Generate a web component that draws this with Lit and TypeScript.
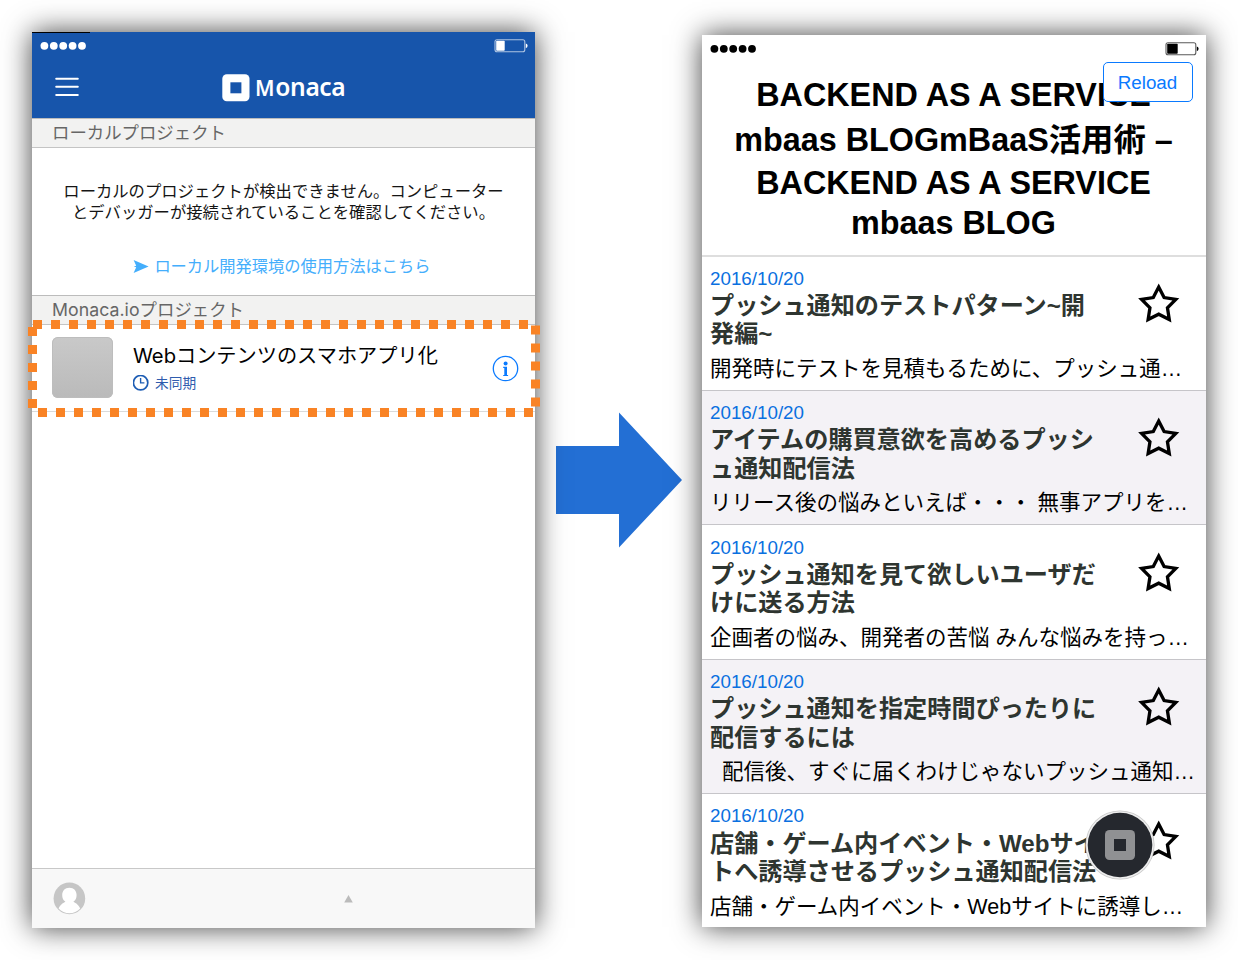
import { LitElement, html, css, svg } from "lit";
import { customElement, property } from "lit/decorators.js";

const starPoints = (() => {
  const pts: string[] = [];
  for (let i = 0; i < 10; i++) {
    const r = i % 2 ? 9.2 : 18;
    const a = -Math.PI / 2 + (i * Math.PI) / 5;
    pts.push(`${(21.7 + r * Math.cos(a)).toFixed(2)},${(22 + r * Math.sin(a)).toFixed(2)}`);
  }
  return pts.join(" ");
})();

@customElement("status-bar")
class StatusBar extends LitElement {
  @property({ type: Number }) level = 8;
  static styles = css`
    :host { display: flex; justify-content: space-between; padding: 0 7px 0 8px; height: 14px; }
    svg { display: block; }
  `;
  render() {
    return html`
      <svg width="50" height="14" viewBox="0 0 50 14" fill="currentColor">
        ${[4.4, 13.8, 23.2, 32.6, 42].map((x) => svg`<circle cx=${x} cy="6.8" r="3.9"/>`)}
      </svg>
      <svg width="34" height="14" viewBox="0 0 34 14" fill="currentColor">
        <rect x="1" y="0.8" width="29.8" height="12" rx="2" fill="none" stroke="currentColor" stroke-opacity="0.65" stroke-width="1.1"/>
        <rect x="2.2" y="1.8" width=${this.level} height="10" rx="0.8"/>
        <path d="M31.8 4.4 Q33.6 4.8 33.6 6.8 Q33.6 8.8 31.8 9.2Z"/>
      </svg>`;
  }
}

@customElement("project-screen")
class ProjectScreen extends LitElement {
  static styles = css`
    :host {
      display: flex; flex-direction: column; position: relative; width: 503px; height: 896px;
      background: #fff; box-shadow: 0 0 27px rgba(0, 0, 0, 0.74);
      font-family: Inter, "Noto Sans CJK JP", sans-serif;
    }
    svg { display: block; flex: none; }
    .top { height: 86px; background: #1755ab; color: #fff; box-sizing: border-box; }
    .notch { width: 58px; height: 1px; background: #000; margin-bottom: 6px; }
    .bar { display: flex; align-items: center; padding: 19px 0 0 23px; height: 30px; }
    .brand { display: flex; align-items: center; margin-left: 143px; gap: 5px; }
    .mark { margin-top: 2px; }
    .word { font: 600 24.6px/30px "Noto Sans", sans-serif; letter-spacing: -0.4px; }
    .cap { font-size: 21px; letter-spacing: 0.8px; }
    .section {
      height: 30px; box-sizing: border-box; padding-left: 20px; background: #f2f2f1; color: #666;
      border-top: 1px solid #bcbcbc; border-bottom: 1px solid #c4c4c4; font-size: 17.4px; line-height: 27px;
      white-space: nowrap;
    }
    .lat { font-size: 17.7px; font-weight: 400; letter-spacing: 0.05px; }
    .local { height: 147px; box-sizing: border-box; padding-top: 33px; text-align: center; font-size: 16.34px; line-height: 21px; color: #151515; white-space: nowrap; }
    .link { display: flex; justify-content: center; align-items: center; gap: 5px; margin: 33px 3px 0 0; color: #44aefc; font-size: 16.25px; }
    .row { height: 87px; box-sizing: border-box; display: flex; padding: 12px 16px 0 20px; border-bottom: 1px solid #dadada; }
    .thumb { width: 61px; height: 61px; border-radius: 6px; background: linear-gradient(#c9c9c9, #bababa); box-shadow: inset 0 0 0 1px #bdbdbd; }
    .info { flex: 1; padding-left: 20px; white-space: nowrap; }
    .name { font-size: 20.2px; line-height: 28px; color: #000; padding-top: 5px; }
    .sync { display: flex; align-items: center; gap: 6px; font-size: 13.7px; line-height: 20px; margin-top: 3px; color: #2f5cae; }
    .i { margin-top: 17.5px; }
    .fill { flex: 1; }
    .foot { height: 60px; box-sizing: border-box; border-top: 1px solid #c8c8c8; background: #f8f8f8; display: flex; align-items: center; padding-left: 21px; }
    .tri { margin-left: 258px; }
    .dots { position: absolute; left: -4px; top: 288px; }
  `;
  render() {
    return html`
      <div class="top">
        <div class="notch"></div>
        <status-bar level="8.5"></status-bar>
        <div class="bar">
          <svg width="24" height="20" viewBox="0 0 24 20" stroke="#fff" stroke-width="2" stroke-linecap="round"><path d="M1.2 1.8H22.8M1.2 9.8H22.8M1.2 17.9H22.8"/></svg>
          <div class="brand">
            <svg class="mark" width="28" height="28" viewBox="0 0 28 28"><rect x="0.3" y="0.2" width="27.2" height="27" rx="4.5" fill="#fff"/><rect x="8.4" y="8.3" width="11" height="11" fill="#1755ab"/></svg>
            <div class="word"><span class="cap">M</span>onaca</div>
          </div>
        </div>
      </div>
      <div class="section">ローカルプロジェクト</div>
      <div class="local">
        <div>ローカルのプロジェクトが検出できません。コンピューター</div>
        <div>とデバッガーが接続されていることを確認してください。</div>
        <div class="link">
          <svg width="16" height="13" viewBox="0 0 16 13" fill="#44aefc"><path d="M0.6 0L15.6 6.5L0.6 13L3.2 7.3L0.8 6.5L3.2 5.7Z"/></svg>
          <span>ローカル開発環境の使用方法はこちら</span>
        </div>
      </div>
      <div class="section"><span class="lat">Monaca.io</span>プロジェクト</div>
      <div class="row">
        <div class="thumb"></div>
        <div class="info">
          <div class="name">Webコンテンツのスマホアプリ化</div>
          <div class="sync">
            <svg width="16" height="16" viewBox="0 0 16 16" fill="none" stroke="#1d5db4" stroke-width="1.7"><circle cx="7.6" cy="7.7" r="7.2"/><path d="M7.6 3.1V7.9H11.4" stroke-width="1.4"/></svg>
            <span>未同期</span>
          </div>
        </div>
        <svg class="i" width="27" height="27" viewBox="0 0 27 27" fill="#0b7bff"><circle cx="13.5" cy="13.5" r="12.2" fill="none" stroke="#0b7bff" stroke-width="1.3"/><circle cx="13.6" cy="8.4" r="2"/><path d="M11.2 11.8H15V20H16.1V21.1H11.2V20H12.3V12.9H11.2Z"/></svg>
      </div>
      <div class="fill"></div>
      <div class="foot">
        <svg width="33" height="33" viewBox="0 0 33 33"><circle cx="16.4" cy="16.4" r="15.8" fill="#c6c6c6"/><path d="M16.4 5.8C21 5.8 23.6 9 23.6 13C23.6 16.5 22.6 18 20.4 19.6C21.5 21 25 21.5 27.2 26.6A15 15 0 0 1 5.6 26.6C7.8 21.5 11.3 21 12.4 19.6C10.2 18 9.2 16.5 9.2 13C9.2 9 11.8 5.8 16.4 5.8Z" fill="#fff"/></svg>
        <svg class="tri" width="9" height="9" viewBox="0 0 9 9"><path d="M4.5 1L8.8 8.4H0.2Z" fill="#bbb"/></svg>
      </div>
      <svg class="dots" width="512" height="97" viewBox="0 0 512 97" stroke="#f98325" stroke-width="9" stroke-dasharray="9 9">
        <path d="M5 4.5H500"/><path d="M507.5 5.5V88"/><path d="M10 92.5H506"/><path d="M4.5 7V89"/>
      </svg>`;
  }
}

interface Post { title: string[]; body: string; }

@customElement("blog-screen")
class BlogScreen extends LitElement {
  static styles = css`
    :host {
      display: block; position: relative; width: 504px; height: 892px;
      background: #fff; box-shadow: 0 0 27px rgba(0, 0, 0, 0.74);
      font-family: "Liberation Sans", "Noto Sans CJK JP", sans-serif; color: #000;
    }
    .body { height: 892px; overflow: hidden; }
    .head { height: 221.6px; box-sizing: border-box; border-bottom: 2px solid #dedede; padding-top: 7px; }
    h1 { margin: 17px 1px 0 0; font-size: 32.35px; font-weight: 700; text-align: center; white-space: nowrap; }
    .l1 { line-height: 45px; } .l2 { line-height: 45px; } .l3 { line-height: 41px; } .l4 { line-height: 38px; }
    .post { height: 134.4px; box-sizing: border-box; padding: 11.2px 8px 0; border-bottom: 1px solid #c6c5c9; display: grid; grid-template-columns: 1fr 44px; grid-template-rows: 81.6px 26px; row-gap: 6.6px; }
    .post:nth-child(odd) { background: #f4f2f6; }
    .date { font-size: 18.8px; line-height: 22px; color: #0a70e0; }
    .title { margin-top: 2.2px; font-size: 24.15px; line-height: 28.4px; font-weight: 700; color: #2e3530; white-space: nowrap; }
    .text { grid-column: 1 / 3; font-size: 21.5px; line-height: 26px; white-space: pre; }
    .star { display: block; margin: 15px 0 0 -17px; }
    .reload { position: absolute; left: 401px; top: 27px; width: 90px; height: 40px; box-sizing: border-box; border: 1.5px solid #0a7aff; border-radius: 5px; background: #fff; color: #0a7aff; font: 18.8px/39px "Liberation Sans", sans-serif; padding: 0 1px 0 0; text-align: center; }
    .fab { position: absolute; left: 383px; top: 775px; }
  `;
  posts: Post[] = [
    { title: ["プッシュ通知のテストパターン~開", "発編~"], body: "開発時にテストを見積もるために、プッシュ通…" },
    { title: ["アイテムの購買意欲を高めるプッシ", "ュ通知配信法"], body: "リリース後の悩みといえば・・・ 無事アプリを…" },
    { title: ["プッシュ通知を見て欲しいユーザだ", "けに送る方法"], body: "企画者の悩み、開発者の苦悩 みんな悩みを持っ…" },
    { title: ["プッシュ通知を指定時間ぴったりに", "配信するには"], body: "  配信後、すぐに届くわけじゃないプッシュ通知…" },
    { title: ["店舗・ゲーム内イベント・Webサイ", "トへ誘導させるプッシュ通知配信法"], body: "店舗・ゲーム内イベント・Webサイトに誘導し…" },
  ];
  render() {
    return html`
      <div class="body">
        <div class="head">
          <status-bar level="10.5"></status-bar>
          <h1>
            <div class="l1">BACKEND AS A SERVICE</div>
            <div class="l2">mbaas BLOGmBaaS活用術 –</div>
            <div class="l3">BACKEND AS A SERVICE</div>
            <div class="l4">mbaas BLOG</div>
          </h1>
        </div>
        ${this.posts.map((p) => html`<div class="post">
          <div>
            <div class="date">2016/10/20</div>
            <div class="title">${p.title.map((t) => html`<div>${t}</div>`)}</div>
          </div>
          <svg class="star" width="44" height="44" viewBox="0 0 44 44"><polygon points=${starPoints} fill="none" stroke="#000" stroke-width="3.3"/></svg>
          <div class="text">${p.body}</div>
        </div>`)}
      </div>
      <button class="reload">Reload</button>
      <svg class="fab" width="70" height="70" viewBox="0 0 70 70">
        <circle cx="35" cy="35" r="34.6" fill="#c9c9c9"/><circle cx="35" cy="35" r="33.8" fill="#eee"/>
        <circle cx="35" cy="35" r="32.3" fill="#25282e"/>
        <rect x="20" y="20" width="30" height="30" rx="4.5" fill="#909193"/><rect x="29" y="29" width="12" height="12" fill="#25282e"/>
      </svg>`;
  }
}

@customElement("app-root")
class AppRoot extends LitElement {
  static styles = css`
    :host { display: flex; align-items: flex-start; width: 1238px; height: 960px; box-sizing: border-box; padding: 32px; background: #fff; overflow: hidden; }
    .arrow { display: block; margin: 380px 20px 0 21px; flex: none; }
    project-screen, blog-screen { flex: none; }
    blog-screen { margin-top: 3px; }
  `;
  render() {
    return html`
      <project-screen></project-screen>
      <svg class="arrow" width="126" height="136" viewBox="0 0 126 136"><path d="M0 34H63V0.5L126 68L63 135.5V102H0Z" fill="#236fd4"/></svg>
      <blog-screen></blog-screen>`;
  }
}
